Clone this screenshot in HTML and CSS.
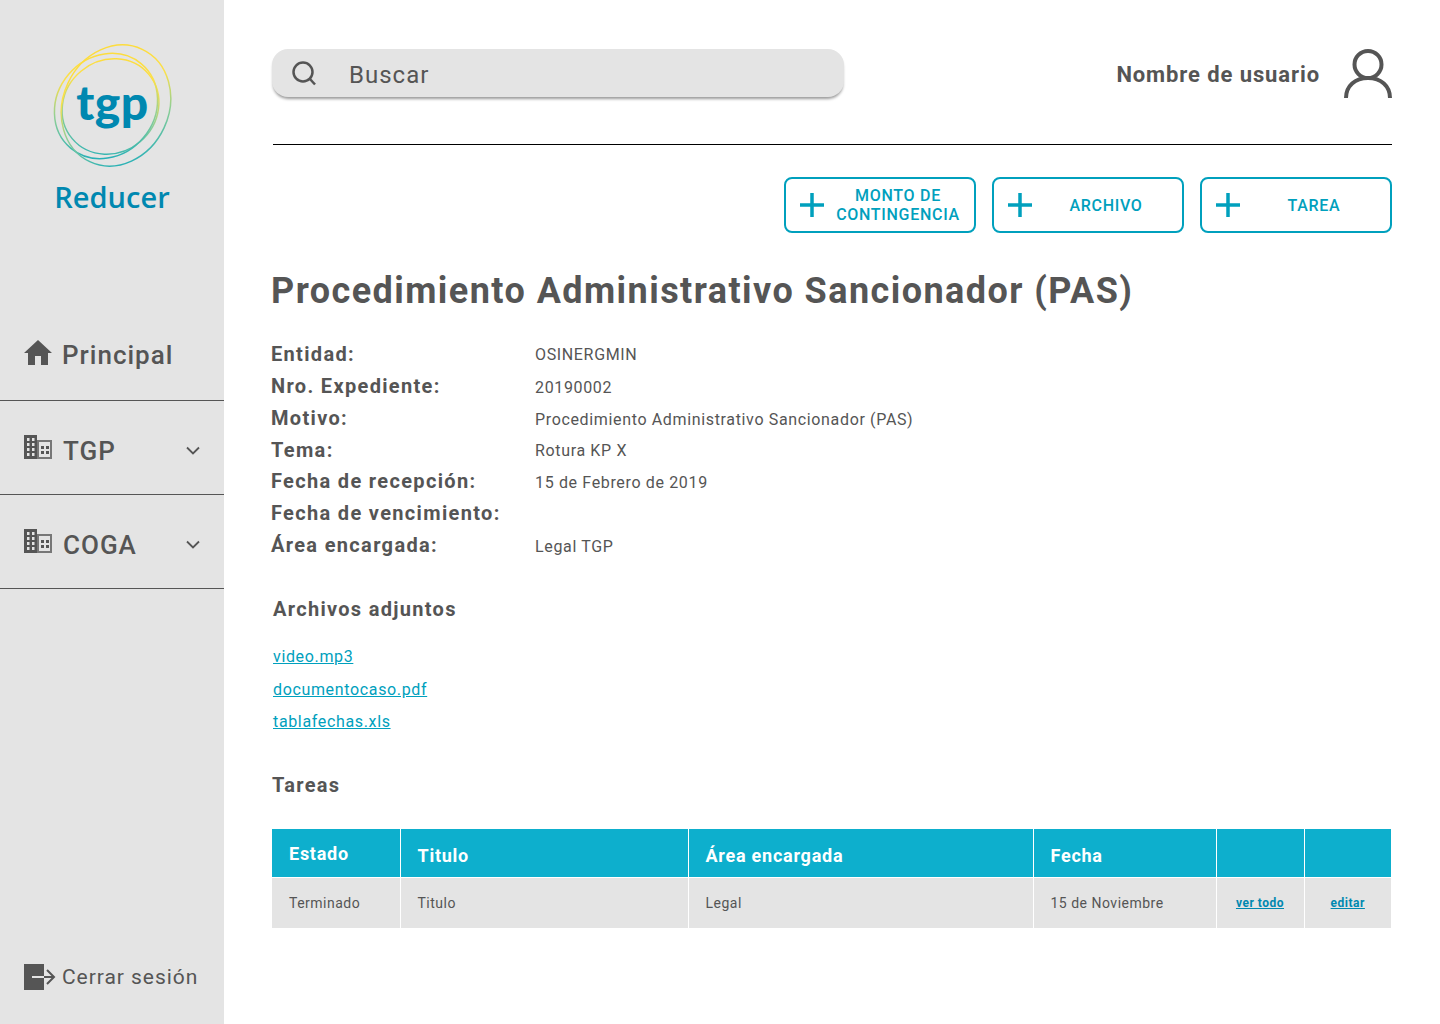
FILE: index.html
```html
<!DOCTYPE html>
<html lang="es">

<head>
  <meta charset="UTF-8">
  <meta name="viewport" content="width=device-width, initial-scale=1.0">
  <title>Reducer - Procedimiento Administrativo Sancionador</title>
  <link rel="stylesheet" href="styles.css">
</head>

<body>
  <aside class="sidebar">
    <div class="brand">
      <svg class="brand-logo" width="124" height="128" viewBox="52 42 124 128">
        <defs>
          <linearGradient id="ring" gradientUnits="userSpaceOnUse" x1="60" y1="150" x2="150" y2="70">
            <stop offset="0" stop-color="#0ba8c0"/>
            <stop offset="0.45" stop-color="#8fcf95"/>
            <stop offset="0.75" stop-color="#fbe04a"/>
            <stop offset="1" stop-color="#fddc3c"/>
          </linearGradient>
        </defs>
        <g fill="none" stroke="url(#ring)" stroke-width="1.500">
          <ellipse cx="111.500" cy="106.500" rx="50" ry="46" transform="rotate(-40 111.500 106.500)"/>
          <ellipse cx="107" cy="106" rx="55" ry="49" transform="rotate(-50 107 106)"/>
          <ellipse cx="117" cy="105.500" rx="62" ry="53" transform="rotate(-65 117 105.500)"/>
        </g>
        <text class="brand-mark" x="113.500" y="120" text-anchor="middle">tgp</text>
      </svg>
      <div class="brand-name">Reducer</div>
    </div>

    <nav class="nav">
      <a class="nav-item nav-first">
        <svg class="nav-icon" width="30" height="26" viewBox="0 0 30 26"><path d="M15 0 L29 13 H25 V25 H18 V16 H12 V25 H5 V13 H1 Z" fill="#555"/></svg>
        <span>Principal</span>
      </a>
      <a class="nav-item">
        <svg class="nav-icon" width="28" height="24" viewBox="0 0 28 24"><use href="#building"/></svg>
        <span>TGP</span>
        <svg class="chevron" width="14" height="9" viewBox="0 0 14 9"><path d="M1 1.500 L7 7.500 L13 1.500" fill="none" stroke="#555" stroke-width="1.800"/></svg>
      </a>
      <a class="nav-item">
        <svg class="nav-icon" width="28" height="24" viewBox="0 0 28 24"><use href="#building"/></svg>
        <span>COGA</span>
        <svg class="chevron" width="14" height="9" viewBox="0 0 14 9"><path d="M1 1.500 L7 7.500 L13 1.500" fill="none" stroke="#555" stroke-width="1.800"/></svg>
      </a>
    </nav>

    <a class="logout">
      <svg width="32" height="26" viewBox="0 0 32 26"><rect width="20" height="26" fill="#555"/><path d="M8 13 H20" stroke="#e4e4e4" stroke-width="2"/><path d="M20 13 H30 M23 6 L30 13 L23 20" fill="none" stroke="#555" stroke-width="2"/></svg>
      <span>Cerrar sesión</span>
    </a>

    <svg class="icon-defs" width="0" height="0">
      <g id="building">
        <rect x="14" y="6" width="13" height="17" fill="none" stroke="#777" stroke-width="2"/>
        <path fill-rule="evenodd" fill="#555" d="M0 0H13V24H0Z M3 3V6H5.500V3Z M8 3V6H10.500V3Z M3 8V11H5.500V8Z M8 8V11H10.500V8Z M3 13V16H5.500V13Z M8 13V16H10.500V13Z M3 18V21H5.500V18Z M8 18V21H10.500V18Z"/>
        <path fill="#555" d="M17 11H20V14H17Z M22 11H25V14H22Z M17 16H20V19H17Z M22 16H25V19H22Z"/>
      </g>
    </svg>
  </aside>

  <main class="content">
    <header class="topbar">
      <div class="search">
        <svg width="26" height="26" viewBox="0 0 26 26"><circle cx="12" cy="12" r="9.500" fill="none" stroke="#555" stroke-width="2.500"/><path d="M18.500 18.500 L24 24.500" stroke="#555" stroke-width="2.500"/></svg>
        <span>Buscar</span>
      </div>
      <div class="user">
        <span>Nombre de usuario</span>
        <svg width="48" height="50" viewBox="0 0 48 50"><circle cx="24" cy="15.500" r="13.500" fill="none" stroke="#555" stroke-width="4"/><path d="M2 49 C2 37 11 29 24 29 C37 29 46 37 46 49" fill="none" stroke="#555" stroke-width="4"/></svg>
      </div>
    </header>

    <div class="actions">
      <button class="action">
        <svg width="26" height="26" viewBox="0 0 26 26"><path d="M13 1V25M1 13H25" stroke="#00a0bd" stroke-width="3.500"/></svg>
        <span>MONTO DE CONTINGENCIA</span>
      </button>
      <button class="action">
        <svg width="26" height="26" viewBox="0 0 26 26"><path d="M13 1V25M1 13H25" stroke="#00a0bd" stroke-width="3.500"/></svg>
        <span>ARCHIVO</span>
      </button>
      <button class="action">
        <svg width="26" height="26" viewBox="0 0 26 26"><path d="M13 1V25M1 13H25" stroke="#00a0bd" stroke-width="3.500"/></svg>
        <span>TAREA</span>
      </button>
    </div>

    <h1 class="title">Procedimiento Administrativo Sancionador (PAS)</h1>

    <dl class="details">
      <dt>Entidad:</dt><dd>OSINERGMIN</dd>
      <dt>Nro. Expediente:</dt><dd>20190002</dd>
      <dt>Motivo:</dt><dd>Procedimiento Administrativo Sancionador (PAS)</dd>
      <dt>Tema:</dt><dd>Rotura KP X</dd>
      <dt>Fecha de recepción:</dt><dd>15 de Febrero de 2019</dd>
      <dt>Fecha de vencimiento:</dt><dd></dd>
      <dt>Área encargada:</dt><dd>Legal TGP</dd>
    </dl>

    <h2 class="section-title files-title">Archivos adjuntos</h2>
    <ul class="files">
      <li><a href="#">video.mp3</a></li>
      <li><a href="#">documentocaso.pdf</a></li>
      <li><a href="#">tablafechas.xls</a></li>
    </ul>

    <h2 class="section-title tasks-title">Tareas</h2>
    <table class="tasks">
      <thead>
        <tr>
          <th class="col-estado">Estado</th>
          <th class="col-titulo">Titulo</th>
          <th class="col-area">Área encargada</th>
          <th class="col-fecha">Fecha</th>
          <th class="col-link"></th>
          <th class="col-link2"></th>
        </tr>
      </thead>
      <tbody>
        <tr>
          <td>Terminado</td>
          <td>Titulo</td>
          <td>Legal</td>
          <td>15 de Noviembre</td>
          <td class="cell-link"><a href="#">ver todo</a></td>
          <td class="cell-link"><a href="#">editar</a></td>
        </tr>
      </tbody>
    </table>
  </main>
</body>

</html>
```

FILE: styles.css
```css
* {
  box-sizing: border-box;
}

body {
  margin: 0;
  height: 1024px;
  display: flex;
  background-color: #fff;
  color: #555;
  font-family: Roboto, "Liberation Sans", sans-serif;
  overflow: hidden;
}

/* sidebar */
.sidebar {
  width: 224px;
  height: 1024px;
  flex-shrink: 0;
  display: flex;
  flex-direction: column;
  background-color: #e4e4e4;
}

.brand {
  height: 307px;
  padding-top: 42px;
  display: flex;
  flex-direction: column;
  align-items: center;
}

.brand-logo {
  display: block;
  margin-left: 1px;
}

.brand-mark {
  font-family: Lato, sans-serif;
  font-size: 48px;
  font-weight: 900;
  letter-spacing: 0.500px;
  fill: #0088b0;
}

.brand-name {
  margin-top: 7px;
  font-family: "Open Sans", sans-serif;
  font-size: 29px;
  line-height: 40px;
  font-weight: 600;
  color: #0088b0;
}

.nav-item {
  height: 94px;
  padding: 0 23px 0 24px;
  display: flex;
  align-items: center;
  gap: 11px;
  border-bottom: 1px solid #555;
  font-size: 26px;
  font-weight: 500;
  letter-spacing: 1.000px;
}

.nav-item span {
  padding-top: 6px;
}

.nav-first {
  padding-left: 23px;
  gap: 9px;
}

.nav-first span {
  padding-top: 2px;
}

.nav-icon {
  flex-shrink: 0;
  margin-top: -2px;
}

.chevron {
  margin-left: auto;
  margin-right: 1px;
  margin-top: 6px;
}

.logout {
  margin-top: auto;
  margin-bottom: 34px;
  padding-left: 24px;
  display: flex;
  align-items: center;
  gap: 6px;
  font-size: 21px;
  letter-spacing: 0.950px;
}

.icon-defs {
  position: absolute;
}

/* main */
.content {
  flex: 1;
  padding: 49px 48px 0 48px;
}

.topbar {
  height: 96px;
  display: flex;
  justify-content: space-between;
  align-items: flex-start;
  margin-left: 1px;
  border-bottom: 1px solid #000;
}

.search {
  width: 572px;
  height: 48px;
  margin-left: -1px;
  padding-left: 19px;
  display: flex;
  align-items: center;
  gap: 32px;
  border-radius: 16px;
  background-color: #e4e4e4;
  box-shadow: 0 3px 3px -1px rgba(0, 0, 0, 0.4);
  font-size: 24px;
  letter-spacing: 1.000px;
}

.search span {
  padding-top: 4px;
}

.user {
  display: flex;
  align-items: center;
  gap: 24px;
  font-size: 22px;
  font-weight: 700;
  letter-spacing: 0.900px;
}

.actions {
  margin-top: 32px;
  display: flex;
  justify-content: flex-end;
  gap: 16px;
}

.action {
  width: 192px;
  height: 56px;
  padding: 0 3px 0 13px;
  display: flex;
  align-items: center;
  border: 2px solid #00a0bd;
  border-radius: 8px;
  background-color: #fff;
  color: #00a0bd;
  font-family: inherit;
  font-size: 16px;
  font-weight: 500;
  line-height: 19px;
  letter-spacing: 0.700px;
}

.action span {
  flex: 1;
  text-align: center;
}

.title {
  margin: 34px 0 0 -1px;
  font-size: 36px;
  line-height: 48px;
  font-weight: 700;
  letter-spacing: 1.440px;
}

.details {
  margin: 22px 0 0 -1px;
  display: grid;
  grid-template-columns: 264px 1fr;
  grid-template-rows: 33px 32px 32px 31px 32px 32px 32px;
  align-items: center;
}

.details dt {
  font-size: 20px;
  font-weight: 700;
  letter-spacing: 1.330px;
}

.details dd {
  margin: 0;
  padding-top: 2px;
  font-size: 16px;
  letter-spacing: 0.650px;
}

.section-title {
  margin: 0;
  font-size: 20px;
  line-height: 26px;
  font-weight: 700;
  letter-spacing: 1.300px;
}

.files-title {
  margin-top: 35px;
  margin-left: 1px;
}

.files {
  margin: 19px 0 0 1px;
  padding: 0;
  list-style: none;
}

.files li {
  height: 32.500px;
  font-size: 16px;
  line-height: 32px;
  letter-spacing: 0.650px;
}

.files a {
  color: #00a0bd;
}

.tasks-title {
  margin-top: 33px;
}

.tasks {
  width: 1119px;
  margin-top: 31px;
  border-collapse: collapse;
  table-layout: fixed;
}

.tasks th {
  height: 49px;
  padding: 5px 0 0 17px;
  background-color: #0dafcd;
  color: #fff;
  text-align: left;
  font-size: 18px;
  font-weight: 700;
  letter-spacing: 0.750px;
  border-right: 1px solid #fff;
}

.tasks .col-estado {
  padding-top: 1px;
}

.tasks td {
  height: 50px;
  padding: 1px 0 0 17px;
  background-color: #e4e4e4;
  font-size: 14px;
  letter-spacing: 0.500px;
  border-right: 1px solid #fff;
  border-top: 1px solid #fff;
}

.tasks th:last-child,
.tasks td:last-child {
  border-right: none;
}

.col-estado { width: 128px; }
.col-titulo { width: 288px; }
.col-area { width: 345px; }
.col-fecha { width: 183px; }
.col-link { width: 88px; }
.col-link2 { width: 87px; }

.tasks .cell-link {
  padding: 0;
  text-align: center;
  font-size: 12px;
  font-weight: 700;
  letter-spacing: 0.500px;
}

.cell-link a {
  color: #0088b0;
}
```
